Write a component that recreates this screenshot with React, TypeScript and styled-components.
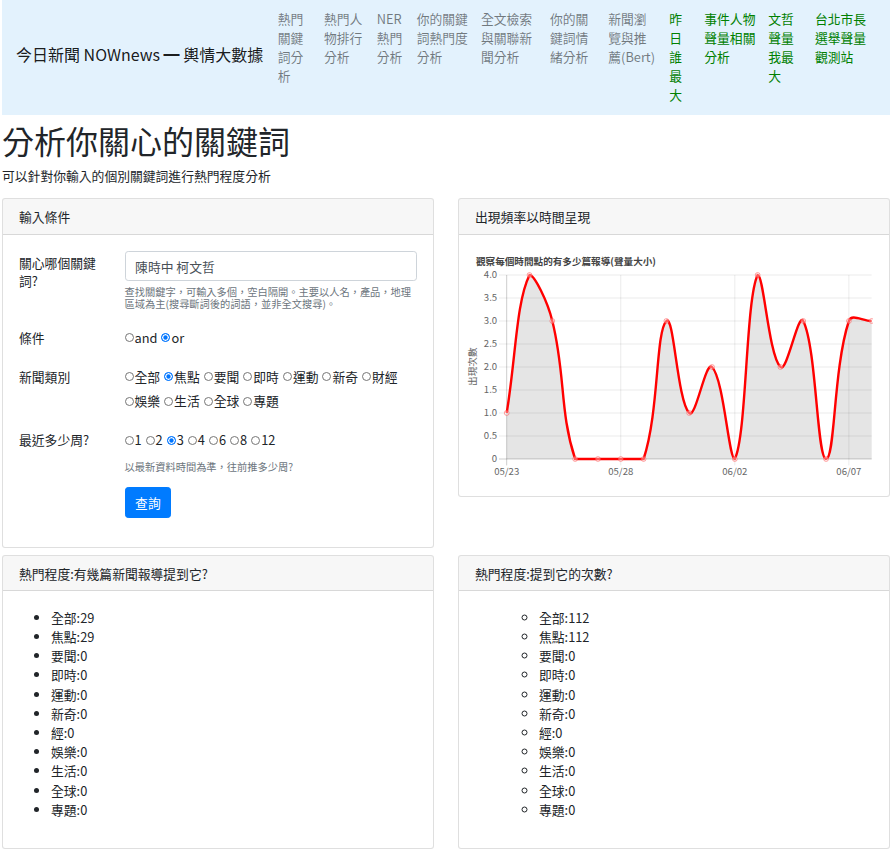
import React from 'react';
import styled, { createGlobalStyle } from 'styled-components';

const GlobalStyle = createGlobalStyle`
	html, body { margin: 0; background: #fff; }
	body {
		font-family: "Noto Sans CJK TC", "Noto Sans", sans-serif;
		font-size: 12.8px;
		line-height: 1.5;
		color: #212529;
	}
	* { box-sizing: border-box; }
`;

const Page = styled.div`
	width: 888px;
	margin-left: 2px;
`;

/* ---------- navbar ---------- */

const Navbar = styled.nav`
	display: flex;
	align-items: flex-start;
	padding: 8.7px 12px 11px 14px;
	background: #e3f2fd;
`;

const Brand = styled.a`
	flex: none;
	width: 255.3px;
	align-self: center;
	margin-bottom: 3.4px;
	font-size: 16px;
	line-height: 24px;
	color: rgba(0, 0, 0, 0.9);
	white-space: nowrap;
	text-decoration: none;
`;

const NavList = styled.ul`
	display: flex;
	margin: 0;
	padding: 0;
	list-style: none;
`;

const NavLink = styled.a<{ $w: number; $green?: boolean }>`
	display: block;
	width: ${({ $w }) => $w}px;
	padding: 0 6px 0 6.4px;
	font-size: 12.8px;
	line-height: 19px;
	color: ${({ $green }) => ($green ? '#008000' : 'rgba(0, 0, 0, 0.5)')};
	text-decoration: none;
`;

const navItems = [
	{ label: '熱門關鍵詞分析', w: 46.3 },
	{ label: '熱門人物排行分析', w: 52.7 },
	{ label: 'NER熱門分析', w: 40 },
	{ label: '你的關鍵詞熱門度分析', w: 64.3 },
	{ label: '全文檢索與關聯新聞分析', w: 69 },
	{ label: '你的關鍵詞情緒分析', w: 58.3 },
	{ label: '新聞瀏覽與推薦(Bert)', w: 61 },
	{ label: '昨日誰最大', w: 35, green: true },
	{ label: '事件人物聲量相關分析', w: 64, green: true },
	{ label: '文哲聲量我最大', w: 46.7, green: true },
	{ label: '台北市長選舉聲量觀測站', w: 64, green: true }
];

/* ---------- page heading ---------- */

const Title = styled.h1`
	margin: 6.8px 0 6.4px;
	font-size: 32px;
	font-weight: 400;
	line-height: 1.2;
`;

const Lead = styled.p`
	margin: 0 0 12.8px;
	line-height: 19.2px;
`;

/* ---------- cards ---------- */

const CardRow = styled.div<{ $mt?: number }>`
	display: grid;
	grid-template-columns: 1fr 1fr;
	column-gap: 24px;
	align-items: start;
	margin-top: ${({ $mt }) => $mt ?? 0}px;
`;

const Card = styled.section`
	border: 1px solid rgba(0, 0, 0, 0.125);
	border-radius: 3.2px;
	background: #fff;
	overflow: hidden;
`;

const CardHeader = styled.div`
	padding: 7.6px 16px;
	line-height: 19.2px;
	background: rgba(0, 0, 0, 0.03);
	border-bottom: 1px solid rgba(0, 0, 0, 0.125);
`;

const CardBody = styled.div<{ $chart?: boolean }>`
	padding: ${({ $chart }) => ($chart ? '16px 16px 16px 4px' : '16px')};
`;

/* ---------- form ---------- */

const FormGroup = styled.div<{ $mb: number }>`
	display: grid;
	grid-template-columns: 81.5px 1fr;
	column-gap: 24px;
	margin-bottom: ${({ $mb }) => $mb}px;
`;

const Label = styled.label<{ $tall?: boolean }>`
	padding-top: ${({ $tall }) => ($tall ? 0 : 3.4)}px;
	line-height: ${({ $tall }) => ($tall ? 24.4 : 18.3)}px;
`;

const TextInput = styled.input`
	display: block;
	width: 100%;
	height: 30.8px;
	padding: 4.8px 9.6px;
	font-family: inherit;
	font-size: 12.8px;
	line-height: 19.2px;
	color: #495057;
	border: 1px solid #ced4da;
	border-radius: 3.2px;
	background: #fff;
	outline: none;
`;

const Help = styled.small<{ $mt: number }>`
	display: block;
	margin-top: ${({ $mt }) => $mt}px;
	font-size: 10.24px;
	line-height: 12.8px;
	color: #6c757d;
`;

const RadioGroup = styled.div`
	display: flex;
	flex-wrap: wrap;
	column-gap: 4px;
	line-height: 24.4px;
`;

const RadioOption = styled.label`
	display: inline-flex;
	align-items: center;
	white-space: nowrap;
`;

const RadioInput = styled.input`
	appearance: none;
	flex: none;
	width: 9px;
	height: 9px;
	margin: 0 1px 0 0;
	border: 1px solid #767676;
	border-radius: 50%;
	background: #fff;

	&:checked {
		border-color: #0075ff;
		background: #0075ff;
		box-shadow: inset 0 0 0 1.3px #fff;
	}
`;

const SubmitButton = styled.button`
	padding: 4.8px 9.6px;
	font-family: inherit;
	font-size: 12.8px;
	line-height: 19.2px;
	color: #fff;
	background: #007bff;
	border: 1px solid #007bff;
	border-radius: 3.2px;
`;

interface RadiosProps {
	name: string;
	options: string[];
	checked: string;
}
const Radios = ({ name, options, checked }: RadiosProps) => (
	<RadioGroup>
		{options.map((o) => (
			<RadioOption key={o}>
				<RadioInput type='radio' name={name} defaultChecked={o === checked} />
				{o}
			</RadioOption>
		))}
	</RadioGroup>
);

const categories = ['全部', '焦點', '要聞', '即時', '運動', '新奇', '財經', '娛樂', '生活', '全球', '專題'];

/* ---------- chart ---------- */

const counts = [1, 4, 3, 0, 0, 0, 0, 3, 1, 2, 0, 4, 2, 3, 0, 3, 3];
const area = { left: 43.7, right: 408.7, top: 24, bottom: 208 };
const xAt = (i: number) => area.left + (i * (area.right - area.left)) / (counts.length - 1);
const yAt = (v: number) => area.bottom - (v * (area.bottom - area.top)) / 4;
const clamp = (v: number, lo: number, hi: number) => Math.min(hi, Math.max(lo, v));

interface Pt {
	x: number;
	y: number;
}

// same spline as chart.js (tension 0.4, control points capped to the chart area)
const buildCurve = (pts: Pt[], t = 0.4) => {
	const cps = pts.map((p, i) => {
		const prev = pts[i - 1] ?? p;
		const next = pts[i + 1] ?? p;
		const d01 = Math.hypot(p.x - prev.x, p.y - prev.y);
		const d12 = Math.hypot(next.x - p.x, next.y - p.y);
		let s01 = d01 / (d01 + d12);
		let s12 = d12 / (d01 + d12);
		s01 = isNaN(s01) ? 0 : s01;
		s12 = isNaN(s12) ? 0 : s12;
		const fa = t * s01;
		const fb = t * s12;
		const cap = (q: Pt) => ({
			x: clamp(q.x, area.left, area.right),
			y: clamp(q.y, area.top, area.bottom)
		});
		return {
			before: cap({ x: p.x - fa * (next.x - prev.x), y: p.y - fa * (next.y - prev.y) }),
			after: cap({ x: p.x + fb * (next.x - prev.x), y: p.y + fb * (next.y - prev.y) })
		};
	});
	let d = `M${pts[0].x},${pts[0].y}`;
	for (let i = 1; i < pts.length; i++) {
		const a = cps[i - 1].after;
		const b = cps[i].before;
		d += ` C${a.x},${a.y} ${b.x},${b.y} ${pts[i].x},${pts[i].y}`;
	}
	return d;
};

const ChartSvg = styled.svg`
	display: block;
	font-family: "Noto Sans CJK TC", sans-serif;
`;

const yTicks = [4, 3.5, 3, 2.5, 2, 1.5, 1, 0.5, 0];
const xTicks = [
	{ i: 0, label: '05/23' },
	{ i: 5, label: '05/28' },
	{ i: 10, label: '06/02' },
	{ i: 15, label: '06/07' }
];

const FrequencyChart = () => {
	const pts = counts.map((v, i) => ({ x: xAt(i), y: yAt(v) }));
	const line = buildCurve(pts);
	const fill = `${line} L${area.right},${area.bottom} L${area.left},${area.bottom} Z`;
	return (
		<ChartSvg width={410} height={229} viewBox='0 0 410 229'>
			<text x={13} y={14} fontSize={9.6} fontWeight={700} fill='#444'>
				觀察每個時間點的有多少篇報導(聲量大小)
			</text>
			{yTicks.map((v) => (
				<g key={v}>
					<line
						x1={area.left - 7.7}
						x2={area.right}
						y1={yAt(v)}
						y2={yAt(v)}
						stroke={v === 0 ? 'rgba(0,0,0,0.25)' : 'rgba(0,0,0,0.1)'}
						strokeWidth={0.8}
					/>
					<text x={area.left - 9.5} y={yAt(v) + 3.4} fontSize={9.6} fill='#666' textAnchor='end'>
						{v === 0 ? '0' : v.toFixed(1)}
					</text>
				</g>
			))}
			{xTicks.map(({ i, label }) => (
				<g key={label}>
					<line
						x1={xAt(i)}
						x2={xAt(i)}
						y1={area.top}
						y2={area.bottom + 6.4}
						stroke={i === 0 ? 'rgba(0,0,0,0.25)' : 'rgba(0,0,0,0.1)'}
						strokeWidth={0.8}
					/>
					<text x={xAt(i)} y={223.8} fontSize={9.6} fill='#666' textAnchor='middle'>
						{label}
					</text>
				</g>
			))}
			<text
				x={9}
				y={115.7}
				fontSize={9.6}
				fill='#666'
				textAnchor='middle'
				dominantBaseline='central'
				transform='rotate(-90 9 115.7)'
			>
				出現次數
			</text>
			<path d={fill} fill='rgba(0,0,0,0.1)' />
			<path d={line} fill='none' stroke='#ff0000' strokeWidth={2.4} />
			{pts.map((p, i) => (
				<circle key={i} cx={p.x} cy={p.y} r={2.4} fill='rgba(255,255,255,0.35)' stroke='rgba(255,80,80,0.6)' strokeWidth={0.9} />
			))}
		</ChartSvg>
	);
};

/* ---------- stat lists ---------- */

const StatList = styled.ul<{ $indent: number; $marker: string }>`
	margin: 0.3px 0 12.8px;
	padding-left: ${({ $indent }) => $indent}px;
	list-style: ${({ $marker }) => $marker};
	line-height: 19.2px;
`;

const articleCounts = [29, 29, 0, 0, 0, 0, 0, 0, 0, 0, 0];
const mentionCounts = [112, 112, 0, 0, 0, 0, 0, 0, 0, 0, 0];
const listLabels = ['全部', '焦點', '要聞', '即時', '運動', '新奇', '經', '娛樂', '生活', '全球', '專題'];

const App = () => (
	<Page>
		<GlobalStyle />
		<Navbar>
			<Brand href='#'>今日新聞 NOWnews ━ 輿情大數據</Brand>
			<NavList>
				{navItems.map((n) => (
					<li key={n.label}>
						<NavLink href='#' $w={n.w} $green={n.green}>
							{n.label}
						</NavLink>
					</li>
				))}
			</NavList>
		</Navbar>

		<Title>分析你關心的關鍵詞</Title>
		<Lead>可以針對你輸入的個別關鍵詞進行熱門程度分析</Lead>

		<CardRow>
			<Card>
				<CardHeader>輸入條件</CardHeader>
				<CardBody>
					<FormGroup $mb={14.5}>
						<Label>關心哪個關鍵詞?</Label>
						<div>
							<TextInput type='text' defaultValue='陳時中 柯文哲' />
							<Help $mt={4.2}>
								查找關鍵字，可輸入多個，空白隔開。主要以人名，產品，地理區域為主(搜尋斷詞後的詞語，並非全文搜尋)。
							</Help>
						</div>
					</FormGroup>
					<FormGroup $mb={14.5}>
						<Label $tall>條件</Label>
						<Radios name='cond' options={['and', 'or']} checked='or' />
					</FormGroup>
					<FormGroup $mb={14.5}>
						<Label $tall>新聞類別</Label>
						<Radios name='cat' options={categories} checked='焦點' />
					</FormGroup>
					<FormGroup $mb={13.2}>
						<Label $tall>最近多少周?</Label>
						<div>
							<Radios name='weeks' options={['1', '2', '3', '4', '6', '8', '12']} checked='3' />
							<Help $mt={8.6}>以最新資料時間為準，往前推多少周?</Help>
						</div>
					</FormGroup>
					<FormGroup $mb={12.8}>
						<span />
						<div>
							<SubmitButton type='button'>查詢</SubmitButton>
						</div>
					</FormGroup>
				</CardBody>
			</Card>

			<Card>
				<CardHeader>出現頻率以時間呈現</CardHeader>
				<CardBody $chart>
					<FrequencyChart />
				</CardBody>
			</Card>
		</CardRow>

		<CardRow $mt={7.5}>
			<Card>
				<CardHeader>熱門程度:有幾篇新聞報導提到它?</CardHeader>
				<CardBody>
					<StatList $indent={32} $marker='disc'>
						{listLabels.map((l, i) => (
							<li key={l}>
								{l}:{articleCounts[i]}
							</li>
						))}
					</StatList>
				</CardBody>
			</Card>
			<Card>
				<CardHeader>熱門程度:提到它的次數?</CardHeader>
				<CardBody>
					<StatList $indent={64} $marker='circle'>
						{listLabels.map((l, i) => (
							<li key={l}>
								{l}:{mentionCounts[i]}
							</li>
						))}
					</StatList>
				</CardBody>
			</Card>
		</CardRow>
	</Page>
);

export default App;
